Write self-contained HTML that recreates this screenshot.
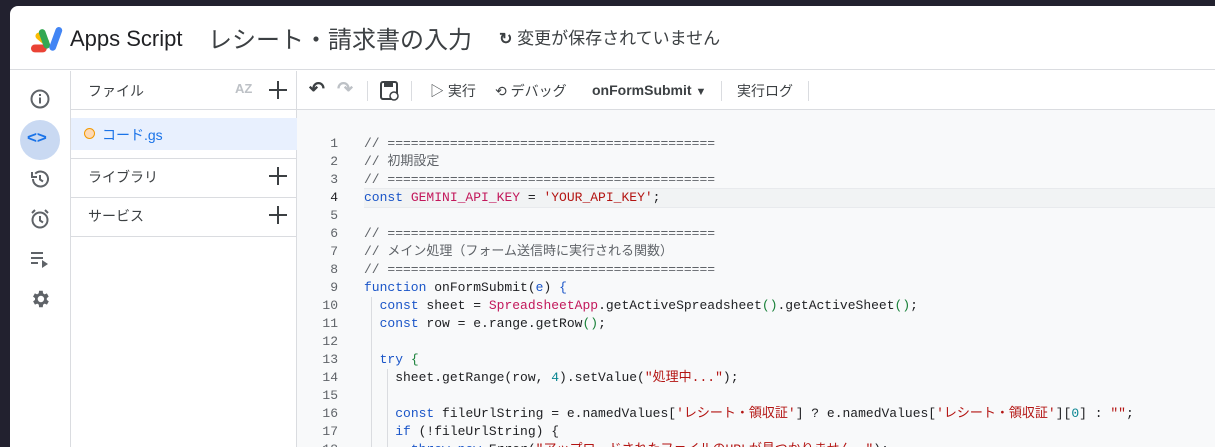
<!DOCTYPE html>
<html><head><meta charset="utf-8"><style>
*{box-sizing:border-box;margin:0;padding:0}
body{width:1215px;height:447px;overflow:hidden;background:#22212f;font-family:"Liberation Sans","Noto Sans CJK JP",sans-serif;position:relative}
.card{position:absolute;left:10px;top:6px;width:1205px;height:441px;background:#fff;border-top-left-radius:8px;overflow:hidden}
.hdr{position:absolute;left:0;top:0;width:1205px;height:64px;border-bottom:1px solid #dadce0}
.abs{position:absolute;white-space:nowrap}
.rail{position:absolute;left:0;top:65px;width:60px;height:380px}
.panel{position:absolute;left:60px;top:65px;width:227px;height:380px;border-left:1px solid #dadce0;border-right:1px solid #dadce0}
.tb{position:absolute;left:287px;top:65px;width:918px;height:39px;border-bottom:1px solid #dadce0;color:#3c4043;font-size:14px}
.ed{position:absolute;left:287px;top:104px;width:918px;height:340px;background:#f8f9fa}
.ln{position:absolute;left:0;width:41px;text-align:right;font:13px "Liberation Mono",monospace;color:#5f6368}
.cd{position:absolute;left:67px;font:13px "Liberation Mono","Noto Sans CJK JP",monospace;color:#202124;white-space:pre}
.c{color:#5f6368}.k{color:#1a55c8}.p{color:#c2185b}.s{color:#b31412}.n{color:#098591}.g{color:#188038}
.sep{position:absolute;top:10px;width:1px;height:20px;background:#dadce0}
.plus{position:absolute;width:18px;height:18px}
.plus:before{content:"";position:absolute;left:8px;top:0;width:2px;height:18px;background:#3c4043}
.plus:after{content:"";position:absolute;left:0;top:8px;width:18px;height:2px;background:#3c4043}
</style></head><body>
<div class="card">
 <div class="hdr">
  <svg class="abs" style="left:21px;top:19px" width="36" height="30" viewBox="0 0 32 26">
   <rect x="0" y="17" width="14" height="7" rx="3.5" fill="#ea4335"/>
   <rect x="3" y="9" width="14" height="6" rx="3" transform="rotate(40 10 12)" fill="#fbbc04"/>
   <rect x="9" y="3" width="6" height="18" rx="3" transform="rotate(-20 12 12)" fill="#34a853"/>
   <rect x="19" y="1" width="6" height="22" rx="3" transform="rotate(20 22 12)" fill="#4285f4"/>
  </svg>
  <div class="abs" style="left:60px;top:20px;font-size:22px;color:#202124">Apps Script</div>
  <div class="abs" style="left:198px;top:14px;font-size:24px;color:#3c4043">レシート・請求書の入力</div>
  <div class="abs" style="left:489px;top:18px;font-size:17px;color:#3c4043"><span style="font-weight:bold;font-size:16px">↻</span> 変更が保存されていません</div>
 </div>
 <div class="rail">
  <svg class="abs" style="left:19px;top:17px" width="22" height="22" viewBox="0 0 22 22"><circle cx="11" cy="11" r="8.5" fill="none" stroke="#5f6368" stroke-width="2"/><rect x="10" y="9.5" width="2" height="6" fill="#5f6368"/><rect x="10" y="6" width="2" height="2" fill="#5f6368"/></svg>
  <div class="abs" style="left:10px;top:49px;width:40px;height:40px;border-radius:20px;background:#c9d9f2"></div>
  <div class="abs" style="left:17px;top:57px;font:bold 17px 'Liberation Sans';color:#1a73e8">&lt;&gt;</div>
  <svg class="abs" style="left:19px;top:97px" width="22" height="22" viewBox="0 0 22 22"><path d="M4 11a7.5 7.5 0 1 0 2.2-5.3" fill="none" stroke="#5f6368" stroke-width="2"/><path d="M3 4v5h5" fill="none" stroke="#5f6368" stroke-width="2"/><path d="M11 7v4.5l3 2" fill="none" stroke="#5f6368" stroke-width="2"/></svg>
  <svg class="abs" style="left:19px;top:137px" width="22" height="22" viewBox="0 0 22 22"><circle cx="11" cy="12" r="7.5" fill="none" stroke="#5f6368" stroke-width="2"/><path d="M11 8v4.5l3 2M3 5l3-3M19 5l-3-3" fill="none" stroke="#5f6368" stroke-width="2"/></svg>
  <svg class="abs" style="left:20px;top:178px" width="22" height="20" viewBox="0 0 22 20"><path d="M1 4h12M1 9h12M1 14h7" stroke="#5f6368" stroke-width="2"/><path d="M12 11l6 4-6 4z" fill="#5f6368"/></svg>
  <svg class="abs" style="left:19px;top:217px" width="22" height="22" viewBox="0 0 24 24"><path fill="#5f6368" d="M19.4 13a7.5 7.5 0 0 0 0-2l2.1-1.6-2-3.5-2.5 1a7 7 0 0 0-1.7-1L15 3h-4l-.4 2.9a7 7 0 0 0-1.7 1l-2.5-1-2 3.5L6.6 11a7.5 7.5 0 0 0 0 2l-2.1 1.6 2 3.5 2.5-1a7 7 0 0 0 1.7 1L11 21h4l.4-2.9a7 7 0 0 0 1.7-1l2.5 1 2-3.5zM13 15.5A3.5 3.5 0 1 1 13 8.5a3.5 3.5 0 0 1 0 7z"/></svg>
 </div>
 <div class="panel">
  <div class="abs" style="left:17px;top:10px;font-size:14px;color:#3c4043">ファイル</div>
  <div class="abs" style="left:164px;top:10px;font:bold 13px 'Liberation Sans';color:#bdc1c6">AZ</div>
  <div class="plus" style="left:198px;top:10px"></div>
  <div class="abs" style="left:0;top:38px;width:226px;height:1px;background:#dadce0"></div>
  <div class="abs" style="left:0;top:47px;width:226px;height:32px;background:#e8f0fe"></div>
  <div class="abs" style="left:13px;top:57px;width:11px;height:11px;border-radius:6px;border:1.5px solid #f29900;background:#fdd9b5"></div>
  <div class="abs" style="left:31px;top:54px;font-size:14px;color:#1a73e8">コード.gs</div>
  <div class="abs" style="left:0;top:87px;width:226px;height:1px;background:#dadce0"></div>
  <div class="abs" style="left:17px;top:96px;font-size:14px;color:#3c4043">ライブラリ</div>
  <div class="plus" style="left:198px;top:96px"></div>
  <div class="abs" style="left:0;top:126px;width:226px;height:1px;background:#dadce0"></div>
  <div class="abs" style="left:17px;top:135px;font-size:14px;color:#3c4043">サービス</div>
  <div class="plus" style="left:198px;top:135px"></div>
  <div class="abs" style="left:0;top:165px;width:226px;height:1px;background:#dadce0"></div>
 </div>
 <div class="tb">
  <div class="abs" style="left:12px;top:7px;font-size:19px;color:#3c4043;font-weight:bold">↶</div>
  <div class="abs" style="left:40px;top:7px;font-size:19px;color:#bdc1c6;font-weight:bold">↷</div>
  <div class="sep" style="left:70px"></div>
  <svg class="abs" style="left:82px;top:9px" width="22" height="22" viewBox="0 0 22 22"><rect x="2" y="2" width="16" height="17" rx="2" fill="none" stroke="#3c4043" stroke-width="2"/><rect x="5" y="3" width="9" height="4" fill="#3c4043"/><circle cx="15" cy="16" r="4" fill="#fff" stroke="#3c4043" stroke-width="1.5"/></svg>
  <div class="sep" style="left:114px"></div>
  <div class="abs" style="left:133px;top:10px">▷ 実行</div>
  <div class="abs" style="left:198px;top:10px">⟲ デバッグ</div>
  <div class="abs" style="left:295px;top:11px;font-weight:bold;font-size:14px">onFormSubmit <span style="font-size:11px">▼</span></div>
  <div class="sep" style="left:424px"></div>
  <div class="abs" style="left:440px;top:10px">実行ログ</div>
  <div class="sep" style="left:511px"></div>
 </div>
 <div class="ed">
  <div class="abs" style="left:67px;top:78px;width:851px;height:20px;border-top:1px solid #e8eaed;border-bottom:1px solid #e8eaed;background:#f1f3f4"></div>
  <div class="abs" style="left:74px;top:187px;width:1px;height:160px;background:#dadce0"></div>
  <div class="abs" style="left:90px;top:259px;width:1px;height:90px;background:#dadce0"></div>
  <div class="ln" style="top:25px;line-height:18px">1<br>2<br>3<br><span style="color:#202124">4</span><br>5<br>6<br>7<br>8<br>9<br>10<br>11<br>12<br>13<br>14<br>15<br>16<br>17<br>18</div>
  <div class="cd" style="top:25px;line-height:18px"><span class="c">// ==========================================</span>
<span class="c">// 初期設定</span>
<span class="c">// ==========================================</span>
<span class="k">const</span> <span class="p">GEMINI_API_KEY</span> = <span class="s">'YOUR_API_KEY'</span>;

<span class="c">// ==========================================</span>
<span class="c">// メイン処理（フォーム送信時に実行される関数）</span>
<span class="c">// ==========================================</span>
<span class="k">function</span> onFormSubmit(<span class="k">e</span>) <span class="k">{</span>
  <span class="k">const</span> sheet = <span class="p">SpreadsheetApp</span>.getActiveSpreadsheet<span class="g">()</span>.getActiveSheet<span class="g">()</span>;
  <span class="k">const</span> row = e.range.getRow<span class="g">()</span>;

  <span class="k">try</span> <span class="g">{</span>
    sheet.getRange(row, <span class="n">4</span>).setValue(<span class="s">"処理中..."</span>);

    <span class="k">const</span> fileUrlString = e.namedValues[<span class="s">'レシート・領収証'</span>] ? e.namedValues[<span class="s">'レシート・領収証'</span>][<span class="n">0</span>] : <span class="s">""</span>;
    <span class="k">if</span> (!fileUrlString) {
      <span class="k">throw</span> <span class="k">new</span> Error(<span class="s">"アップロードされたファイルのURLが見つかりません。"</span>);</div>
 </div>
</div>
</body></html>
